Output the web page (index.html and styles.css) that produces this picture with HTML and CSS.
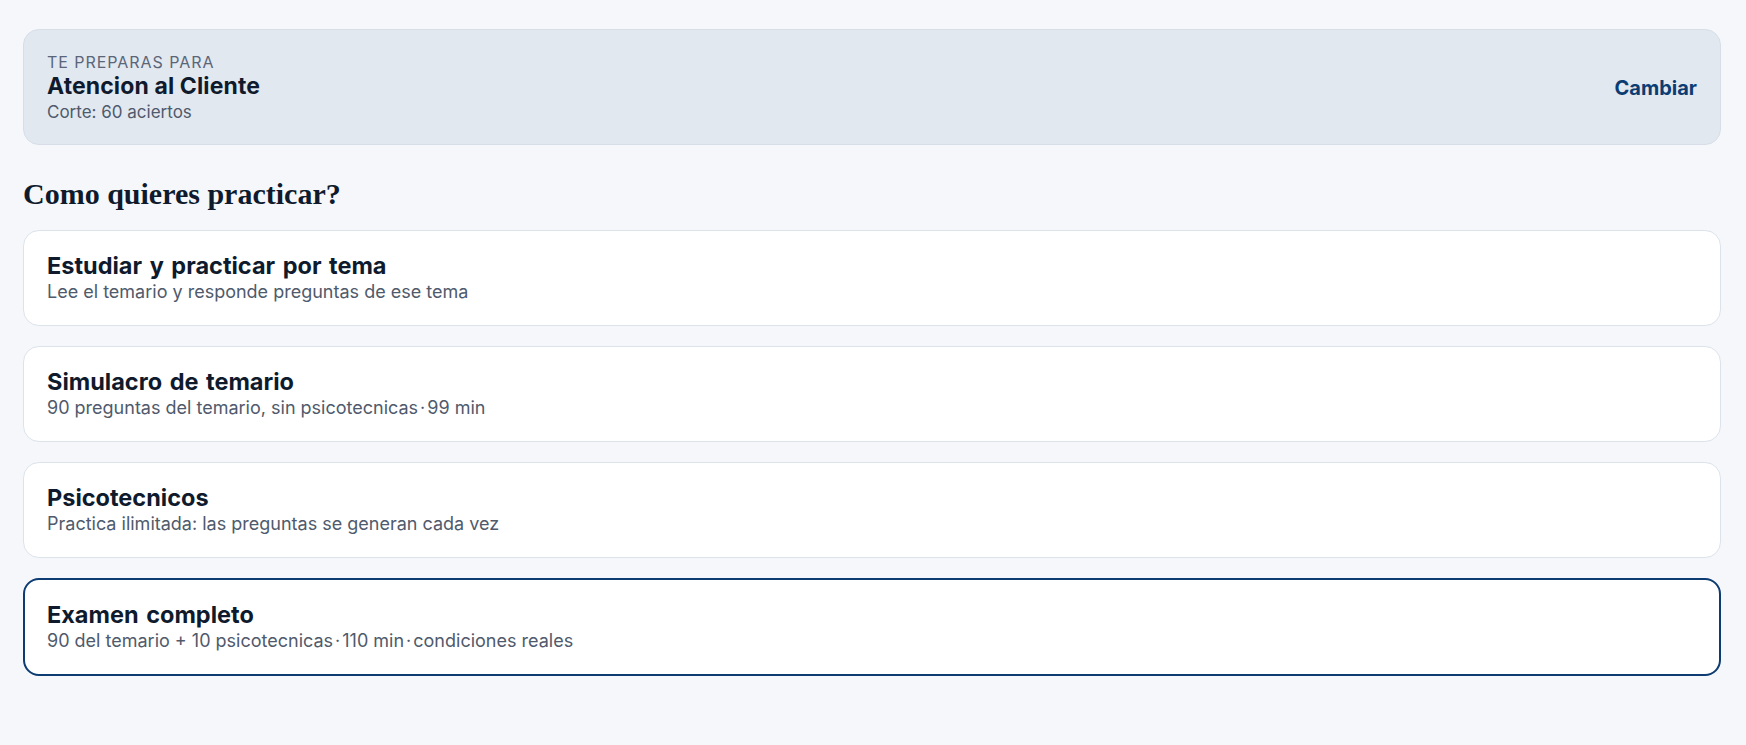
FILE: index.html
```html
<!DOCTYPE html>
<html lang="es">
<head>
<meta charset="utf-8">
<title>Practicar</title>
<link rel="stylesheet" href="styles.css">
</head>
<body>
<main class="page">
  <section class="target">
    <div class="target-info">
      <div class="target-label">TE PREPARAS PARA</div>
      <div class="target-name">Atencion al Cliente</div>
      <div class="target-cut">Corte: 60 aciertos</div>
    </div>
    <a class="target-change" href="#">Cambiar</a>
  </section>

  <h2 class="section-title">Como quieres practicar?</h2>

  <div class="modes">
    <a class="mode" href="#">
      <div class="mode-title">Estudiar y practicar por tema</div>
      <div class="mode-desc">Lee el temario y responde preguntas de ese tema</div>
    </a>
    <a class="mode" href="#">
      <div class="mode-title">Simulacro de temario</div>
      <div class="mode-desc">90 preguntas del temario, sin psicotecnicas<span class="sep">·</span>99 min</div>
    </a>
    <a class="mode" href="#">
      <div class="mode-title">Psicotecnicos</div>
      <div class="mode-desc">Practica ilimitada: las preguntas se generan cada vez</div>
    </a>
    <a class="mode mode-selected" href="#">
      <div class="mode-title">Examen completo</div>
      <div class="mode-desc">90 del temario + 10 psicotecnicas<span class="sep">·</span>110 min<span class="sep">·</span>condiciones reales</div>
    </a>
  </div>
</main>
</body>
</html>
```

FILE: styles.css
```css
* {
  box-sizing: border-box;
}

html,
body {
  margin: 0;
  background: #f5f7fa;
}

body {
  font-family: Inter, "Noto Sans", sans-serif;
  color: #0f1b2d;
}

.page {
  padding: 29px 25px 40px 23px;
}

/* Selected exam summary */
.target {
  display: flex;
  align-items: center;
  justify-content: space-between;
  padding: 22px 23px 21px 23px;
  background: #e2e8f0;
  border: 1px solid #d7dee8;
  border-radius: 16px;
}

.target-label {
  font-size: 16px;
  line-height: 20px;
  letter-spacing: 0.06em;
  color: #5b6578;
}

.target-name {
  margin-top: 1px;
  font-size: 23px;
  line-height: 26px;
  font-weight: 700;
  letter-spacing: 0.005em;
  color: #0f1b2d;
}

.target-cut {
  margin-top: 2px;
  font-size: 17px;
  line-height: 22px;
  color: #4f5a6c;
}

.target-change {
  font-size: 20px;
  font-weight: 700;
  color: #0b3d72;
  text-decoration: none;
}

.section-title {
  margin: 31px 0 18px;
  font-family: "Liberation Serif", "DejaVu Serif", serif;
  font-size: 30px;
  line-height: 36px;
  font-weight: 700;
  color: #0f1b2d;
}

/* Practice modes */
.modes {
  display: flex;
  flex-direction: column;
  gap: 20px;
}

.mode {
  display: block;
  padding: 21px 23px 21px;
  background: #ffffff;
  border: 1px solid #dde3eb;
  border-radius: 16px;
  text-decoration: none;
  color: inherit;
}

.mode-selected {
  border: 2px solid #0c3c72;
  padding: 21px 22px 21px;
}

.mode-title {
  font-size: 23.5px;
  line-height: 28px;
  font-weight: 700;
  word-spacing: 2px;
  color: #0f1b2d;
}

.mode-desc {
  font-size: 18px;
  line-height: 24px;
  color: #4f5a6c;
}

.sep {
  margin: 0 2px;
}
```
